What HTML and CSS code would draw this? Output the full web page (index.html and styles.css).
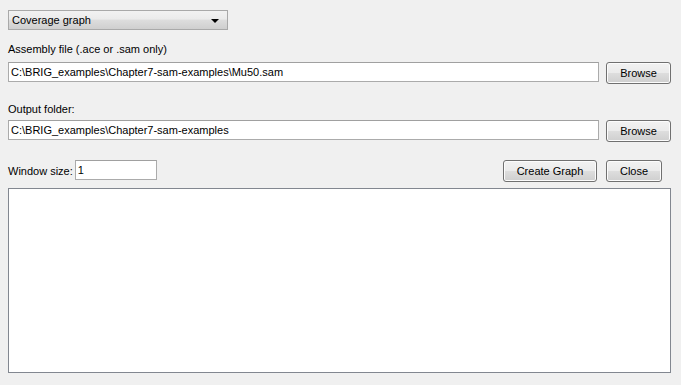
FILE: index.html
```html
<!DOCTYPE html>
<html>
<head>
<meta charset="utf-8">
<link rel="stylesheet" href="styles.css">
</head>
<body>
<div class="app">
  <div class="combo">
    <span class="combo-text">Coverage graph</span>
    <span class="combo-arrow"></span>
  </div>
  <div class="label label-first">Assembly file (.ace or .sam only)</div>
  <div class="field-row">
    <div class="input wide">C:\BRIG_examples\Chapter7-sam-examples\Mu50.sam</div>
    <div class="btn browse">Browse</div>
  </div>
  <div class="label label-second">Output folder:</div>
  <div class="field-row">
    <div class="input wide">C:\BRIG_examples\Chapter7-sam-examples</div>
    <div class="btn browse">Browse</div>
  </div>
  <div class="action-row">
    <span class="inline-label">Window size:</span>
    <div class="input small">1</div>
    <div class="spacer"></div>
    <div class="btn create">Create Graph</div>
    <div class="btn close">Close</div>
  </div>
  <div class="output"></div>
</div>
</body>
</html>
```

FILE: styles.css
```css
html, body {
  margin: 0;
  padding: 0;
  background: #f0f0f0;
}
body {
  font-family: "Liberation Sans", Arial, sans-serif;
  font-size: 11px;
  color: #000;
  width: 681px;
  height: 385px;
  overflow: hidden;
}
.app {
  padding: 10px 10px 0 8px;
  display: flex;
  flex-direction: column;
}
.combo {
  width: 215px;
  height: 18px;
  border: 1px solid #a9a9a9;
  background: linear-gradient(#f2f2f2, #ebebeb 45%, #dddddd 50%, #cfcfcf);
  display: flex;
  align-items: center;
  padding: 0 0 0 3px;
  box-sizing: content-box;
}
.combo-text {
  flex: 1;
  line-height: 18px;
}
.combo-arrow {
  width: 0;
  height: 0;
  border-left: 4px solid transparent;
  border-right: 4px solid transparent;
  border-top: 4px solid #000;
  margin-right: 8px;
  margin-top: 2px;
}
.label {
  height: 14px;
  line-height: 14px;
}
.label-first {
  margin-top: 12px;
  margin-bottom: 6px;
}
.label-second {
  margin-top: 18px;
  margin-bottom: 4px;
}
.field-row {
  display: flex;
  align-items: flex-start;
  gap: 7px;
}
.input {
  height: 18px;
  line-height: 18px;
  border: 1px solid #ababab;
  border-top-color: #a0a0a0;
  background: #fff;
  padding: 0 2px;
  white-space: nowrap;
  overflow: hidden;
}
.wide {
  flex: 1;
}
.btn {
  height: 20px;
  line-height: 20px;
  border: 1px solid #707070;
  border-radius: 3px;
  background: linear-gradient(#f2f2f2, #ebebeb 48%, #dddddd 52%, #cfcfcf);
  text-align: center;
  box-shadow: inset 0 0 0 1px #fcfcfc;
}
.browse {
  width: 63px;
}
.action-row {
  display: flex;
  align-items: center;
  margin-top: 18px;
  height: 22px;
}
.inline-label {
  margin-right: 2px;
}
.small {
  width: 76px;
  margin-top: -2px;
}
.spacer {
  flex: 1;
}
.create {
  width: 92px;
}
.close {
  width: 54px;
  margin-left: 9px;
  margin-right: 9px;
}
.output {
  margin-top: 6px;
  height: 183px;
  border: 1px solid #828790;
  background: #fff;
}
```
